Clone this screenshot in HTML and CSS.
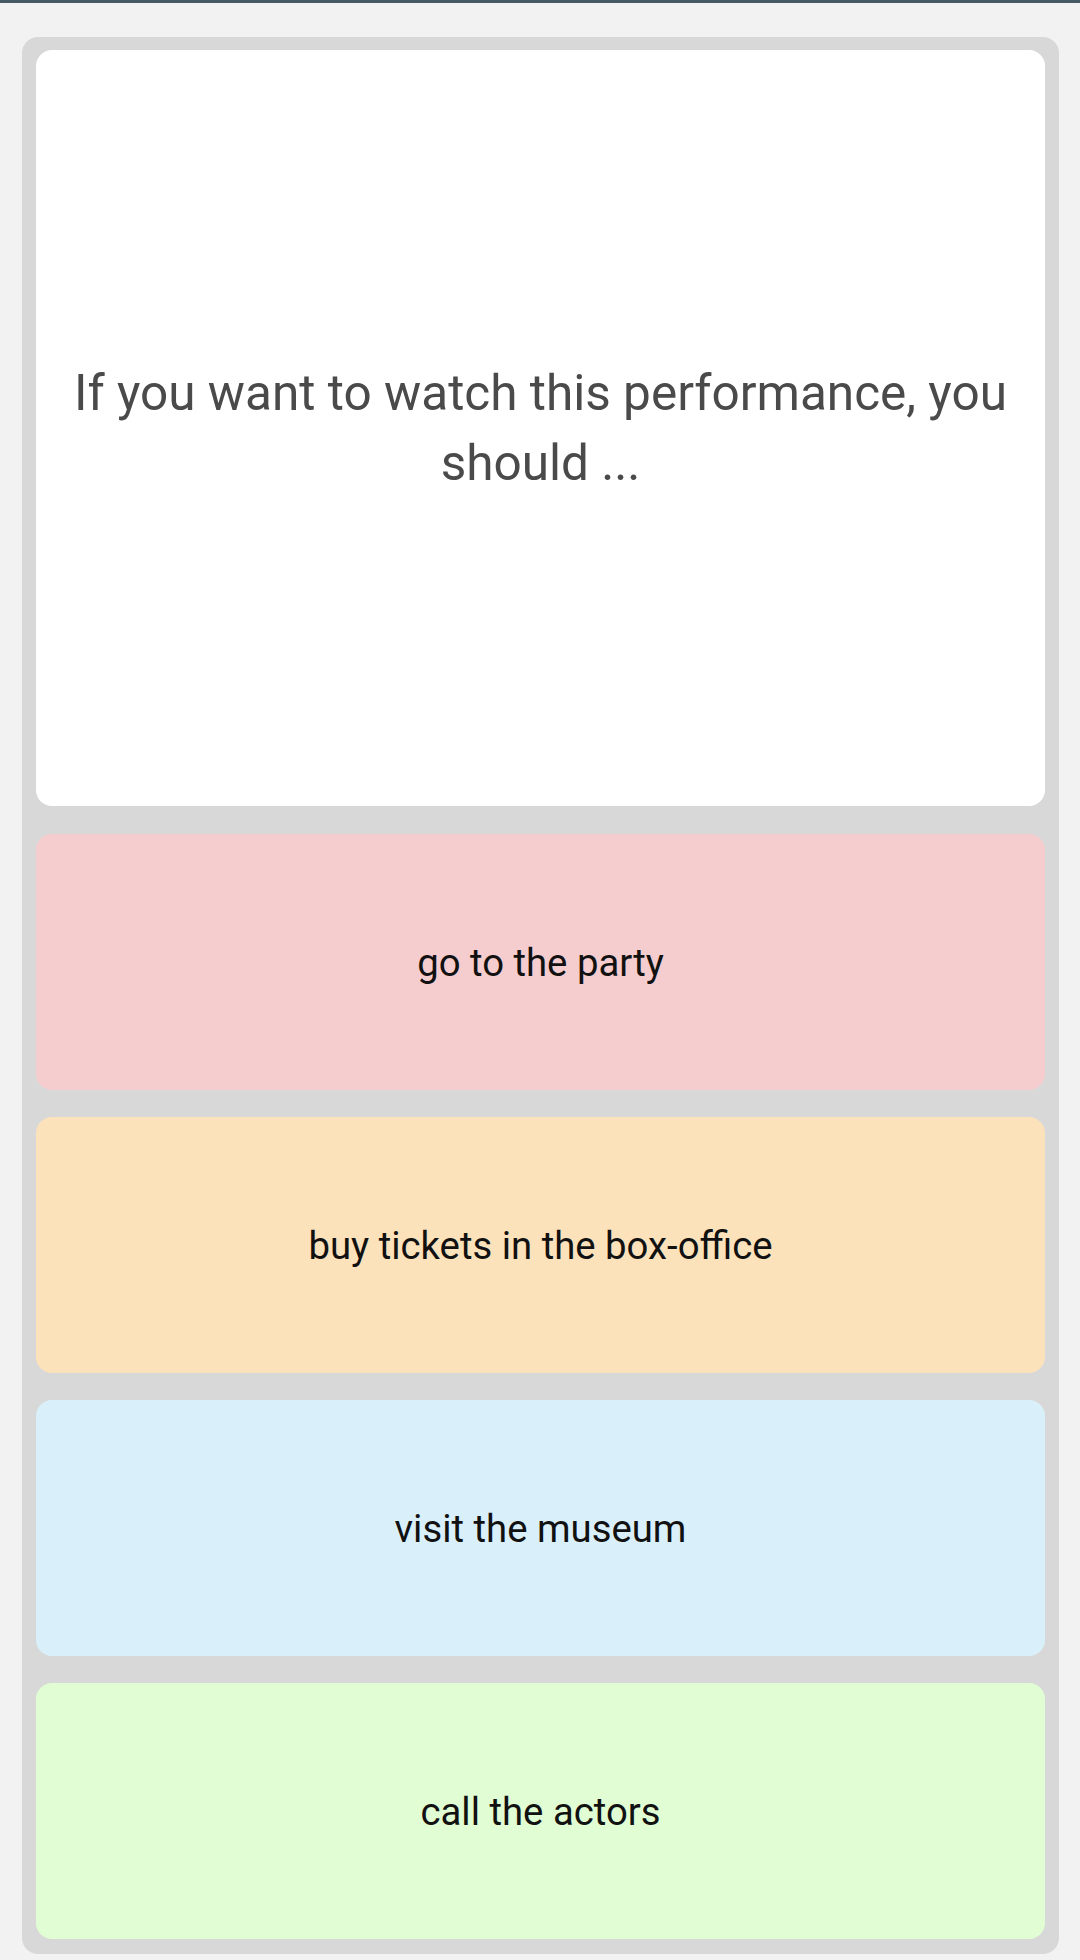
FILE: index.html
```html
<!DOCTYPE html>
<html>
<head>
<meta charset="utf-8">
<link rel="stylesheet" href="styles.css">
</head>
<body>
<div class="topbar"></div>
<main class="quiz">
  <section class="question">
    <p>If you want to watch this performance, you should ...</p>
  </section>
  <div class="answers">
    <div class="answer pink">go to the party</div>
    <div class="answer orange">buy tickets in the box-office</div>
    <div class="answer blue">visit the museum</div>
    <div class="answer green">call the actors</div>
  </div>
</main>
</body>
</html>
```
FILE: styles.css
```css
html, body {
  margin: 0;
  padding: 0;
  background: #f2f2f2;
  font-family: Roboto, "Liberation Sans", Arial, sans-serif;
}
.topbar {
  height: 3px;
  background: #455a64;
}
.quiz {
  margin: 34px 21px 0 22px;
  background: #d8d8d8;
  border-radius: 16px;
  padding: 13px 14px 15px 14px;
  display: flex;
  flex-direction: column;
  gap: 28px;
}
.question {
  height: 756px;
  background: #fff;
  border-radius: 16px;
  display: flex;
  align-items: center;
  justify-content: center;
  padding: 0 20px;
  box-sizing: border-box;
}
.question p {
  margin: 0;
  text-align: center;
  font-size: 49.5px;
  line-height: 70px;
  color: #4a4a4a;
}
.answers {
  display: flex;
  flex-direction: column;
  gap: 27px;
}
.answer {
  height: 256px;
  border-radius: 16px;
  display: flex;
  align-items: center;
  justify-content: center;
  font-size: 38.3px;
  color: #111;
}
.pink { background: #f6cdcf; }
.orange { background: #fce2bb; }
.blue { background: #d9f0fa; }
.green { background: #e1fdd3; }
```
